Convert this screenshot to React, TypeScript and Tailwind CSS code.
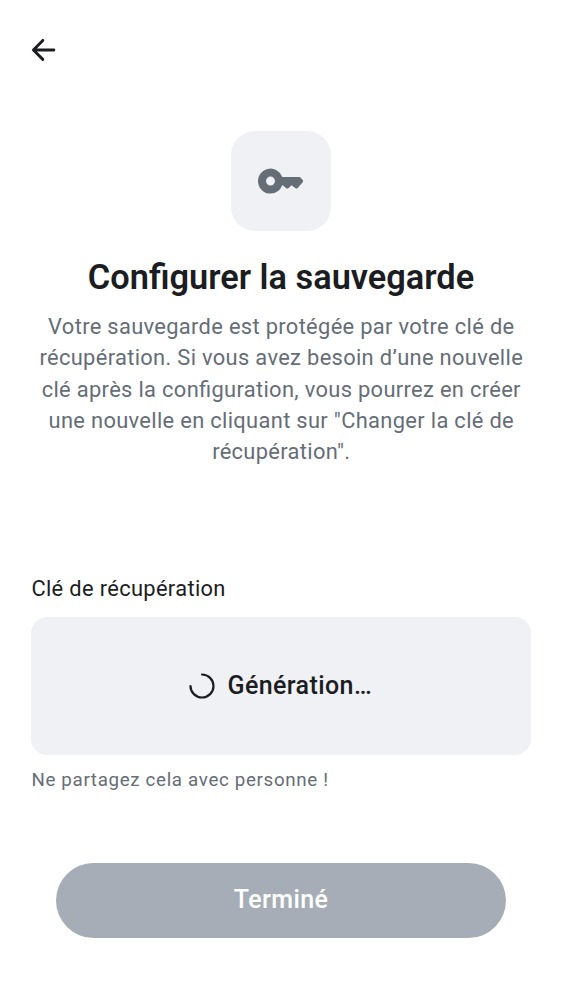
export default function App() {
  return (
    <main className="flex h-[1000px] w-[562px] flex-col bg-white px-[31px] font-[Roboto,sans-serif] text-[#1b1d22]">
      <header className="flex h-[100px] items-center">
        <button aria-label="Retour" className="block">
          <svg className="block h-[26px] w-[26px]" viewBox="0 0 26 26" fill="none" stroke="currentColor" strokeWidth="2.9" strokeLinecap="round" strokeLinejoin="round">
            <path d="M22.9 13H3M11.8 3.4L2.4 13l9.4 9.4" />
          </svg>
        </button>
      </header>
      <section className="flex flex-col items-center pt-[31px] text-center">
        <div className="flex size-[100px] items-center justify-center rounded-[24px] bg-[#f0f1f5]">
          <svg className="block h-[26px] w-[46px]" viewBox="0 0 46 26" fill="#656e77">
            <path fillRule="evenodd" d="M12.5 25.6A12.5 12.5 0 1 1 24.3 9H41.1Q42 9 42.7 9.7L44.7 12.1Q45.5 13.1 44.7 14.2L39.7 19.9Q38.5 21.1 37.1 20.1L33.6 17.3L30.7 19.9Q29.3 21.1 27.9 20L24.4 17Q21 25.6 12.5 25.6ZM12.5 17.6A4.5 4.5 0 1 0 12.5 8.6A4.5 4.5 0 0 0 12.5 17.6Z" />
          </svg>
        </div>
        <h1 className="mt-[25px] text-[34.375px] leading-[42px] font-semibold whitespace-nowrap">Configurer la sauvegarde</h1>
        <p className="mt-[13px] pl-[0.6px] text-[21.875px] leading-[31.25px] tracking-[0.33px] whitespace-nowrap text-[#656d77] [font-feature-settings:'liga'_1]">
          Votre sauvegarde est protégée par votre clé de<br />
          récupération. Si vous avez besoin d’une nouvelle<br />
          clé après la configuration, vous pourrez en créer<br />
          une nouvelle en cliquant sur "Changer la clé de<br />
          récupération".
        </p>
      </section>
      <section className="mt-[106px]">
        <h2 className="pl-[0.4px] text-[21.875px] leading-[31.25px] tracking-[0.34px]">Clé de récupération</h2>
        <div className="mt-[12.5px] flex h-[138px] items-center justify-center gap-[12.5px] rounded-[16px] bg-[#f0f1f5] pr-[1px]">
          <svg className="block size-[26px]" viewBox="0 0 26 26" fill="none" stroke="currentColor" strokeWidth="2.2" strokeLinecap="round">
            <path d="M13 1.5A11.5 11.5 0 1 1 1.5 13" />
          </svg>
          <span className="-mt-px text-[25px] font-medium tracking-[0.4px]">Génération…</span>
        </div>
        <p className="mt-[11px] pl-[0.4px] text-[18.75px] leading-[28px] tracking-[0.66px] text-[#656d77]">Ne partagez cela avec personne !</p>
      </section>
      <button className="mx-[25px] mt-[68.5px] h-[75px] rounded-full bg-[#a6adb7] text-[25px] font-medium tracking-[0.4px] text-white">Terminé</button>
    </main>
  );
}
